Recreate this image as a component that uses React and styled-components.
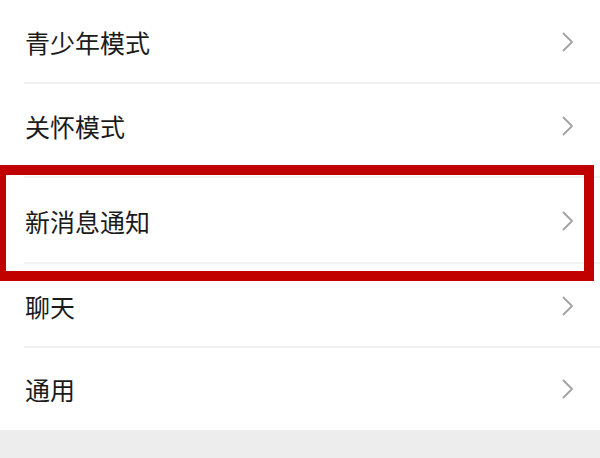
import React from 'react';
import styled, { createGlobalStyle } from 'styled-components';

const GlobalStyle = createGlobalStyle`
  html, body {
    margin: 0;
    padding: 0;
    background: #ededed;
  }
  body {
    font-family: "Noto Sans CJK SC", "Noto Sans", sans-serif;
    overflow: hidden;
  }
`;

const Page = styled.div`
  width: 600px;
  height: 458px;
  background: #ededed;
  overflow: hidden;
`;

const List = styled.ul`
  position: relative;
  list-style-type: none;
  margin: 0;
  padding: 0;
  background: #fff;
`;

const Row = styled.li`
  position: relative;
  display: flex;
  align-items: center;
  justify-content: space-between;
  box-sizing: border-box;
  height: ${p => p.$height}px;
  padding: 0 26px ${p => p.$extra}px 25px;
  &::after {
    content: '';
    display: ${p => (p.$last ? 'none' : 'block')};
    position: absolute;
    left: 24px;
    right: 0;
    bottom: 0;
    height: 2px;
    background: #f2f2f2;
  }
`;

const Label = styled.span`
  font-size: 25px;
  line-height: 1;
  color: #1b1b1b;
  letter-spacing: 0;
`;

const Highlight = styled.div`
  position: absolute;
  left: -4px;
  top: 165px;
  width: 598px;
  height: 116px;
  box-sizing: border-box;
  border: 10px solid #c10000;
  pointer-events: none;
`;

const Chevron = () => (
  <svg width="12" height="20" viewBox="0 0 12 20" fill="none">
    <path d="M1.5 1.5 L10 10 L1.5 18.5" stroke="#a3a3a3" strokeWidth="1.8" strokeLinecap="round" strokeLinejoin="round" />
  </svg>
);

const items = [
  { key: 'teen', name: '青少年模式', height: 84, extra: 0 },
  { key: 'care', name: '关怀模式', height: 94, extra: 10 },
  { key: 'notify', name: '新消息通知', height: 86, extra: 0 },
  { key: 'chat', name: '聊天', height: 84, extra: 0 },
  { key: 'general', name: '通用', height: 82, extra: 0, last: true },
];

const App = () => {
  return (
    <Page>
      <GlobalStyle />
      <List>
        {items.map(item => (
          <Row key={item.key} $height={item.height} $extra={item.extra} $last={item.last}>
            <Label>{item.name}</Label>
            <Chevron />
          </Row>
        ))}
        <Highlight />
      </List>
    </Page>
  );
};

export default App;
